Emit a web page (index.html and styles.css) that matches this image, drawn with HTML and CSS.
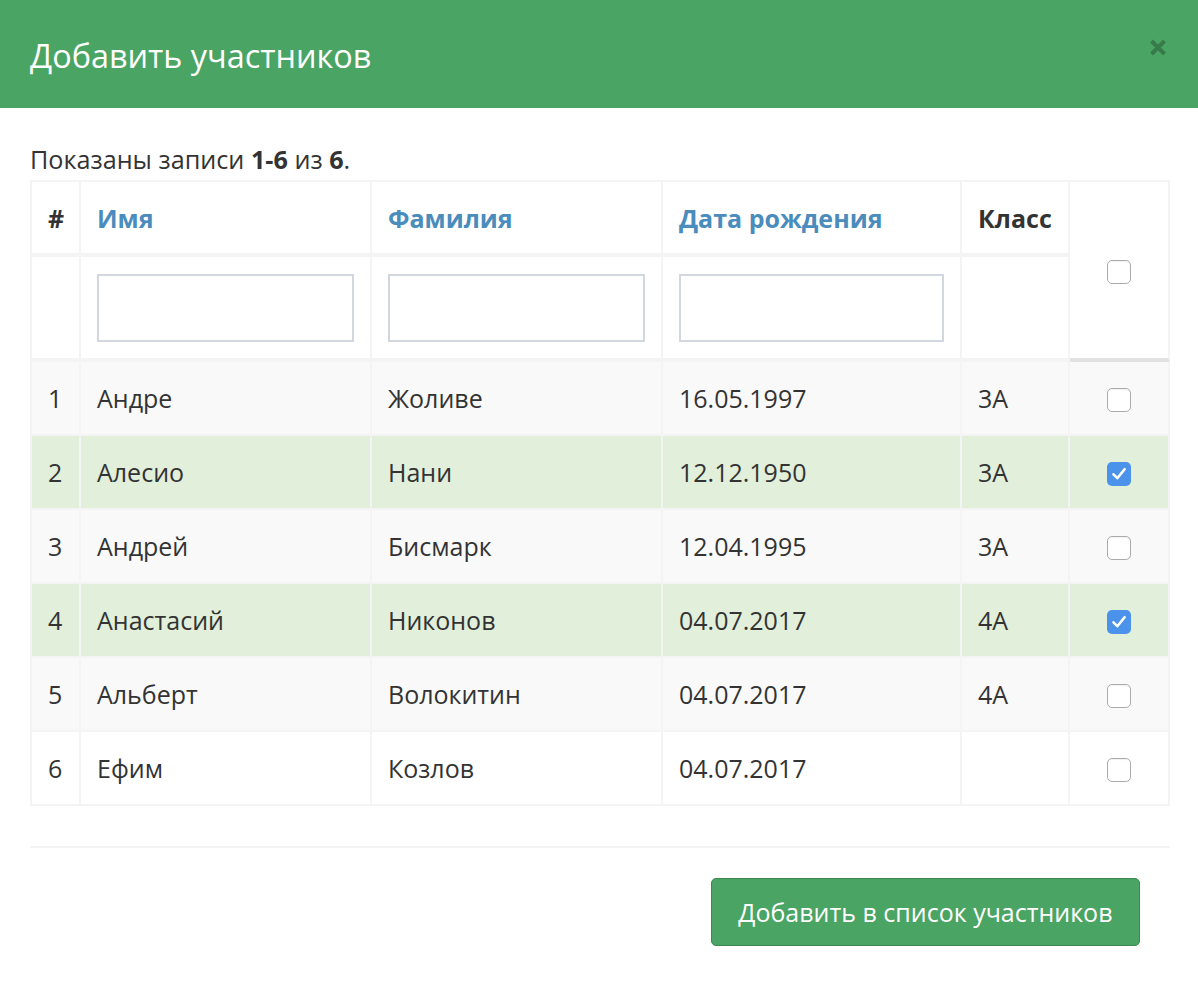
FILE: index.html
```html
<!DOCTYPE html>
<html lang="ru">
<head>
<meta charset="utf-8">
<title>Добавить участников</title>
<link rel="stylesheet" href="styles.css">
</head>
<body>
<div class="modal">
  <header class="modal-header">
    <h4 class="modal-title">Добавить участников</h4>
    <button class="close" type="button" aria-label="Закрыть">
      <svg width="18" height="19" viewBox="0 0 18 19"><path d="M2.5 3 L15.5 16 M15.5 3 L2.5 16" stroke="currentColor" stroke-width="4" stroke-linecap="butt"/></svg>
    </button>
  </header>
  <div class="modal-body">
    <div class="summary">Показаны записи <b>1-6</b> из <b>6</b>.</div>
    <table class="grid">
      <thead>
        <tr class="head">
          <th class="c-num">#</th>
          <th class="c-name"><a class="sort">Имя</a></th>
          <th class="c-surname"><a class="sort">Фамилия</a></th>
          <th class="c-date"><a class="sort">Дата рождения</a></th>
          <th class="c-class">Класс</th>
          <th class="c-check" rowspan="2"><span class="cb"></span></th>
        </tr>
        <tr class="filters">
          <td></td>
          <td><input class="filter" type="text"></td>
          <td><input class="filter" type="text"></td>
          <td><input class="filter" type="text"></td>
          <td></td>
        </tr>
      </thead>
      <tbody>
        <tr class="odd"><td>1</td><td>Андре</td><td>Жоливе</td><td>16.05.1997</td><td>3А</td><td class="c-check"><span class="cb"></span></td></tr>
        <tr class="selected"><td>2</td><td>Алесио</td><td>Нани</td><td>12.12.1950</td><td>3А</td><td class="c-check"><span class="cb checked"><svg width="24" height="24" viewBox="0 0 24 24"><path d="M6.5 12.3 L10.3 16.2 L17.6 7.2" fill="none" stroke="#fff" stroke-width="2.6" stroke-linecap="round" stroke-linejoin="round"/></svg></span></td></tr>
        <tr class="odd"><td>3</td><td>Андрей</td><td>Бисмарк</td><td>12.04.1995</td><td>3А</td><td class="c-check"><span class="cb"></span></td></tr>
        <tr class="selected"><td>4</td><td>Анастасий</td><td>Никонов</td><td>04.07.2017</td><td>4А</td><td class="c-check"><span class="cb checked"><svg width="24" height="24" viewBox="0 0 24 24"><path d="M6.5 12.3 L10.3 16.2 L17.6 7.2" fill="none" stroke="#fff" stroke-width="2.6" stroke-linecap="round" stroke-linejoin="round"/></svg></span></td></tr>
        <tr class="odd"><td>5</td><td>Альберт</td><td>Волокитин</td><td>04.07.2017</td><td>4А</td><td class="c-check"><span class="cb"></span></td></tr>
        <tr><td>6</td><td>Ефим</td><td>Козлов</td><td>04.07.2017</td><td></td><td class="c-check"><span class="cb"></span></td></tr>
      </tbody>
    </table>
  </div>
  <div class="modal-footer">
    <button class="btn" type="button">Добавить в список участников</button>
  </div>
</div>
</body>
</html>
```

FILE: styles.css
```css
* { box-sizing: border-box; }
html, body { margin: 0; padding: 0; background: #fff; }
body {
  font-family: "Open Sans", "Noto Sans", sans-serif;
  color: #333;
}

.modal-header {
  height: 108px;
  background: #4aa464;
  display: flex;
  align-items: center;
  justify-content: space-between;
  padding: 0 31px 0 30px;
}
.modal-title {
  margin: 0;
  font-weight: 400;
  font-size: 32.4px;
  line-height: 1;
  color: #fff;
  position: relative;
  top: 1px;
}
.close {
  background: none;
  border: 0;
  padding: 0;
  width: 18px;
  height: 19px;
  color: rgba(0, 0, 0, 0.25);
  display: block;
  cursor: pointer;
  position: relative;
  top: -7px;
}
.close svg { display: block; }

.modal-body {
  padding: 36px 28px 40px 30px;
}
.summary {
  font-size: 25.2px;
  line-height: 30px;
  margin-bottom: 6px;
}
.summary b { font-weight: 700; }

.grid {
  width: 1140px;
  table-layout: fixed;
  border-collapse: separate;
  border-spacing: 0;
  border-top: 2px solid #f4f4f4;
  border-left: 2px solid #f4f4f4;
  font-size: 25px;
}
.grid th, .grid td {
  border-right: 2px solid #f4f4f4;
  border-bottom: 2px solid #f4f4f4;
  padding: 0 16px;
  text-align: left;
  vertical-align: middle;
  white-space: nowrap;
}
.grid th { font-weight: 700; }
.grid .head th { height: 75px; border-bottom-width: 4px; }
.grid .filters td { height: 105px; border-bottom-width: 4px; }
.grid tbody td { height: 74px; }

.c-num { width: 49px; }
.c-name { width: 291px; }
.c-surname { width: 291px; }
.c-date { width: 299px; }
.c-class { width: 108px; }
.grid .c-check { width: 100px; padding: 0; }
.grid th.c-check { border-bottom: 4px solid #e2e2e2; }

.sort { color: #4a8cbc; text-decoration: none; }

.filter {
  display: block;
  width: 100%;
  height: 68px;
  border: 2px solid #d2d6de;
  border-radius: 0;
  background: #fff;
  margin: 0;
  font: inherit;
  padding: 0 12px;
}

.odd td { background: #f9f9f9; }
.selected td { background: #e1efdb; }

.cb {
  display: block;
  width: 24px;
  height: 24px;
  margin: 4px auto 0;
  border: 1.5px solid #acacac;
  border-radius: 5px;
  background: #fff;
  box-shadow: inset 0 1px 1px rgba(0, 0, 0, 0.06);
}
.cb.checked {
  border: 0;
  background: #4a92ea;
  box-shadow: none;
}
.cb svg { display: block; }

.modal-footer {
  margin: 0 28px 0 30px;
  border-top: 2px solid #f4f4f4;
  padding: 30px 30px 0 0;
  display: flex;
  justify-content: flex-end;
}
.btn {
  height: 68px;
  padding: 0 26.5px;
  background: #4aa464;
  border: 1.5px solid #3c8a52;
  border-radius: 5px;
  color: #fff;
  font-family: inherit;
  font-size: 25px;
  cursor: pointer;
}
```
